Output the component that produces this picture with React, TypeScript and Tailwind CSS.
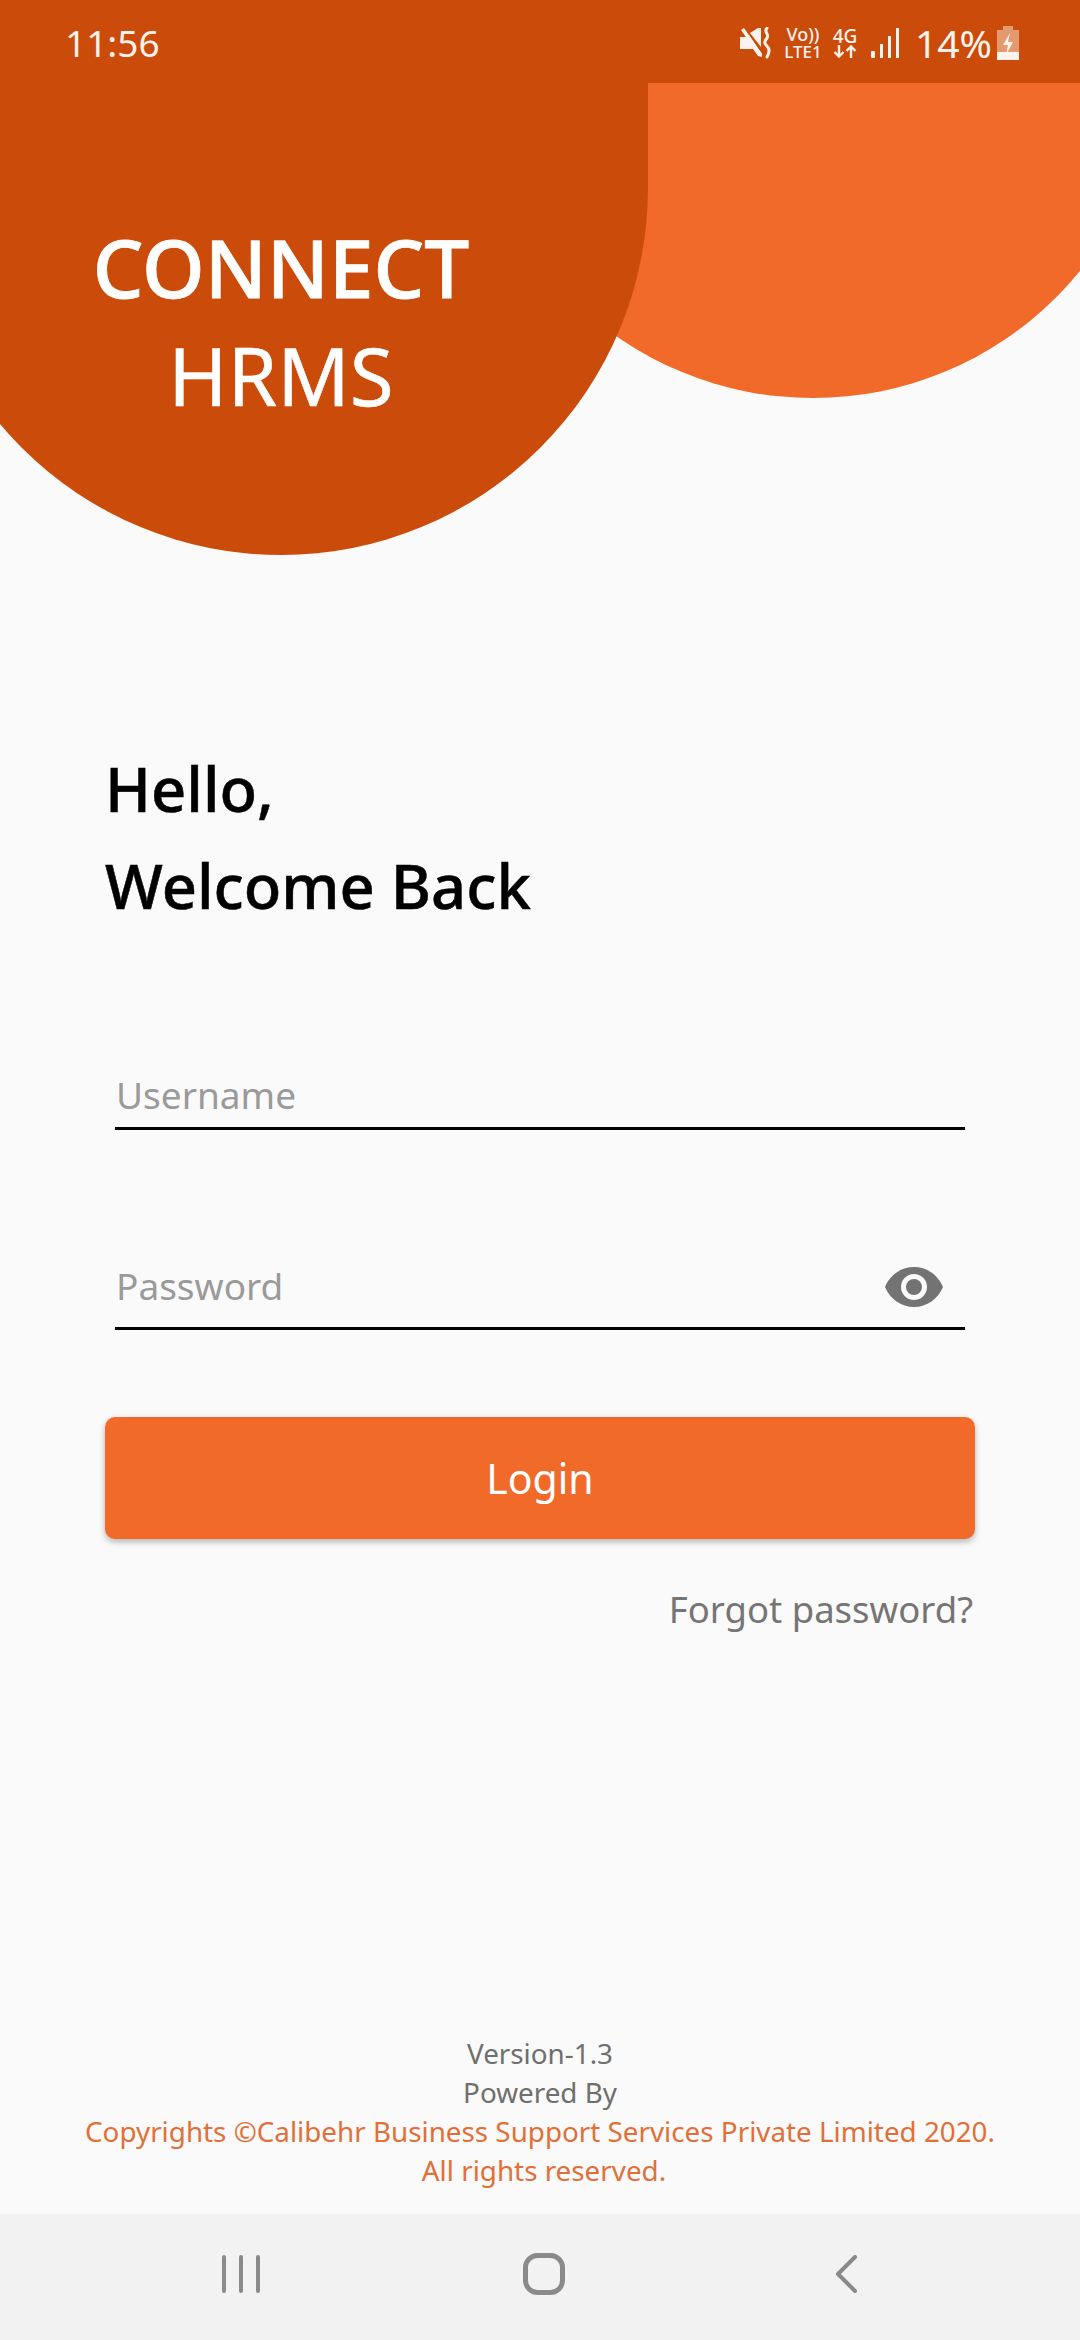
const font = "font-['Noto_Sans',sans-serif]";

// status bar icons
const MuteIcon = () => (
  <svg width="32" height="32" viewBox="0 0 32 32" fill="#fdf3ec">
    <path d="M0 10h6l3-2 13 19v3l-4-1-5-7H0z" />
    <path d="M10 6l8-5h3v19z" />
    <path d="M1 3l3-2 18 26-3 2z" />
    <path d="M27 1c-4 4 3 6 0 10s-3 5 0 8 3 6 0 11" fill="none" stroke="#fdf3ec" strokeWidth="3" strokeLinecap="round" />
  </svg>
);

const NetworkIcon = () => (
  <div className="flex flex-col items-center w-[24px] text-[#fdf3ec]">
    <span className="text-[19px] leading-[18px] font-medium">4G</span>
    <svg width="24" height="13" viewBox="0 0 24 13" fill="none" stroke="#fdf3ec" strokeWidth="2.4">
      <path d="M6 0v11M1.5 7l4.500 4.500L10.500 7" />
      <path d="M18 13V2M13.500 6L18 1.500 22.500 6" />
    </svg>
  </div>
);

const SignalIcon = () => (
  <svg width="29" height="30" viewBox="0 0 29 30" fill="#fdf3ec">
    <rect x="0" y="23" width="4" height="7" rx="1" />
    <rect x="9" y="16" width="3" height="14" />
    <rect x="17" y="8" width="3" height="22" />
    <rect x="25" y="0" width="3" height="30" />
  </svg>
);

const BatteryIcon = () => (
  <svg width="22" height="34" viewBox="0 0 22 34">
    <path d="M6 0h10v4h6v30H0V4h6z" fill="#e49a70" />
    <path d="M0 26h22v8H0z" fill="#fdf3ec" />
    <path d="M13 7l-7 12h5l-2 10 7-13h-5z" fill="#fdf3ec" />
  </svg>
);

const EyeIcon = () => (
  <svg className="mt-[3px]" width="58" height="40" viewBox="0 0 58 40" fill="#737373">
    <path fillRule="evenodd" d="M29 0c13 0 24 8 29 20-5 12-16 20-29 20S5 32 0 20C5 8 16 0 29 0zm0 7a13 13 0 1 0 0 26 13 13 0 0 0 0-26z" />
    <circle cx="29" cy="20" r="8" />
  </svg>
);

const Field = ({ label, className, children }: { label: string; className: string; children?: React.ReactNode }) => (
  <div className={`flex items-center justify-between mx-[10px] border-b-[3px] border-black pl-[1px] ${className}`}>
    <span className="text-[37px] leading-[52px] text-[#9a9a9a]">{label}</span>
    {children}
  </div>
);

export default function App() {
  return (
    <div className={`flex flex-col w-[1080px] h-[2340px] overflow-hidden bg-[#fafafa] ${font}`}>
      <header className="relative h-[555px] shrink-0">
        <div className="absolute left-[469px] top-[-290px] w-[688px] h-[688px] rounded-full bg-[#f26a29]" />
        <div className="absolute left-[-86px] top-0 w-[734px] h-[555px] rounded-b-[367px] bg-[#cb4c0a]" />

        <div className="relative flex items-center justify-between h-[83px] pt-[2px] pl-[65px] pr-[61px] bg-[#cb4c0a] text-[#fdf3ec]">
          <span className="text-[37px] leading-none">11:56</span>
          <div className="flex items-center">
            <MuteIcon />
            <div className="flex flex-col items-center w-[40px] ml-[11px] font-medium">
              <span className="text-[18px] leading-[18px]">Vo))</span>
              <span className="text-[17px] leading-[17px]">LTE1</span>
            </div>
            <div className="ml-[10px]"><NetworkIcon /></div>
            <div className="ml-[14px]"><SignalIcon /></div>
            <span className="ml-[15px] text-[39px] leading-none">14%</span>
            <div className="ml-[5px]"><BatteryIcon /></div>
          </div>
        </div>

        <h1 className="relative w-[562px] mt-[130px] text-center text-[80px] leading-[108px] text-white font-medium [-webkit-text-stroke:0.8px_white]">
          CONNECT
          <br />
          <span className="font-normal [-webkit-text-stroke:0.5px_white]">HRMS</span>
        </h1>
      </header>

      <main className="flex flex-col flex-1 px-[105px]">
        <h2 className="mt-[185px] text-[61.5px] leading-[97px] font-medium text-black [-webkit-text-stroke:0.5px_black]">
          Hello,
          <br />
          Welcome Back
        </h2>

        <Field label="Username" className="mt-[130px] h-[66px] pb-[2px]" />
        <Field label="Password" className="mt-[114px] h-[86px] pr-[22px]">
          <EyeIcon />
        </Field>

        <button className="mt-[87px] h-[122px] pt-[2px] rounded-[10px] bg-[#f26a29] text-white text-[41px] shadow-[0_3px_6px_rgba(0,0,0,0.28)]">
          Login
        </button>

        <a className="self-end mr-[2px] mt-[44px] text-[36.5px] leading-[52px] text-[#757575]">Forgot password?</a>

        <footer className="mt-auto mb-[24px] mx-[-40px] text-center text-[27.8px] leading-[39px]">
          <p className="text-[#6f6f6f]">Version-1.3</p>
          <p className="text-[#6f6f6f]">Powered By</p>
          <p className="text-[#e26f38] whitespace-nowrap">Copyrights ©Calibehr Business Support Services Private Limited 2020.</p>
          <p className="pl-[8px] text-[#e26f38]">All rights reserved.</p>
        </footer>
      </main>

      <nav className="flex items-center justify-between h-[126px] shrink-0 pl-[222px] pr-[223px] pb-[6px] bg-[#f2f2f2]">
        <svg width="38" height="38" viewBox="0 0 38 38" stroke="#8a8a8a" strokeWidth="4" strokeLinecap="round">
          <path d="M2 2v34M19 2v34M36 2v34" />
        </svg>
        <svg className="mr-[8px]" width="42" height="42" viewBox="0 0 42 42" fill="none" stroke="#8a8a8a" strokeWidth="5">
          <rect x="2.500" y="2.500" width="37" height="37" rx="12" />
        </svg>
        <svg width="22" height="38" viewBox="0 0 22 38" fill="none" stroke="#8a8a8a" strokeWidth="4" strokeLinecap="round" strokeLinejoin="round">
          <path d="M20 2L3 19l17 17" />
        </svg>
      </nav>
    </div>
  );
}
